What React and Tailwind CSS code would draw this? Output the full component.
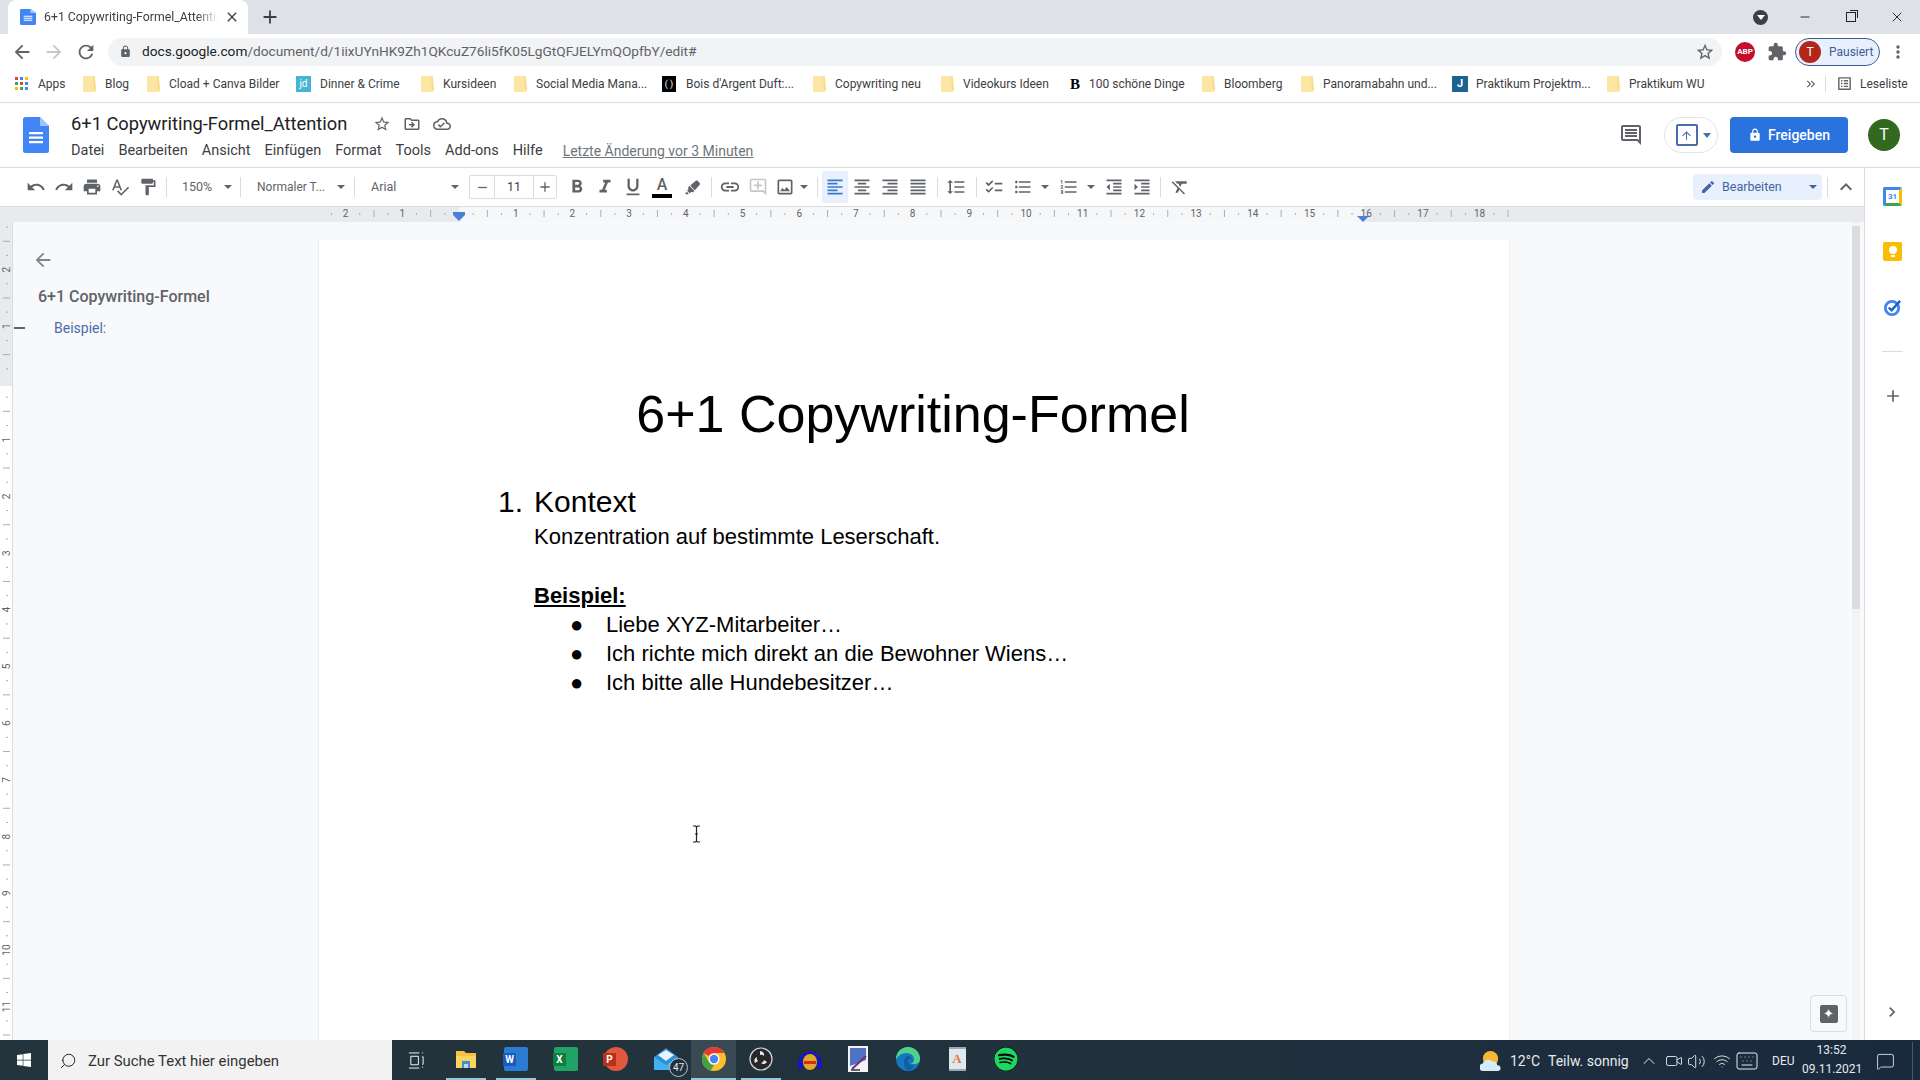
import React from 'react'
import {
  MdArrowBack, MdArrowForward, MdRefresh, MdLock, MdStarBorder, MdExtension, MdMoreVert, MdAdd, MdClose, MdRemove,
  MdUndo, MdRedo, MdPrint, MdSpellcheck, MdFormatPaint, MdFormatBold, MdFormatItalic, MdFormatUnderlined, MdLink,
  MdOutlineAddComment, MdOutlineImage, MdFormatAlignLeft, MdFormatAlignCenter, MdFormatAlignRight, MdFormatAlignJustify,
  MdFormatLineSpacing, MdChecklist, MdFormatListBulleted, MdFormatListNumbered, MdFormatIndentDecrease, MdFormatIndentIncrease,
  MdFormatClear, MdEdit, MdExpandLess, MdOutlineInsertComment, MdOutlineDriveFileMove, MdOutlineCloudDone, MdChevronRight,
  MdArrowUpward, MdKeyboardDoubleArrowRight, MdOutlineListAlt,
} from 'react-icons/md'
import { FaHighlighter, FaWindows, FaSpotify } from 'react-icons/fa'
import { ChevronUp, Video, Volume2, Wifi, Keyboard, MessageSquare, Minus, X, Search } from 'lucide-react'

function FolderMark() {
  return (
    <svg width="13" height="16" viewBox="0 0 13 16" className="shrink-0">
      <path d="M0 1.5C0 .7.7 0 1.5 0H10l3 13v1.5c0 .8-.7 1.5-1.5 1.5h-10C.7 16 0 15.300 0 14.500z" fill="#fbe7a1" />
      <path d="M10 0h.5c.8 0 1.500.7 1.500 1.500L13 14l-2-1z" fill="#f6dc8b" />
    </svg>
  )
}

function AppsGrid() {
  const cols = ['#ea4335', '#4285f4', '#fbbc04', '#34a853', '#ea4335', '#4285f4', '#fbbc04', '#34a853', '#4285f4']
  return (
    <div className="grid grid-cols-3 gap-[2px] w-[13px] shrink-0">
      {cols.map((c, i) => <div key={i} className="w-[3px] h-[3px]" style={{ background: c }} />)}
    </div>
  )
}

function JdMark() {
  return <div className="w-[15px] h-[16px] bg-[#45b5d6] text-white text-[10px] leading-[16px] text-center shrink-0">jd</div>
}

function BoisMark() {
  return <div className="w-[14px] h-[16px] bg-black text-white text-[9px] leading-[16px] text-center shrink-0">( )</div>
}

function BMark() {
  return <div className="w-[14px] text-black text-[15px] font-bold leading-[16px] text-center shrink-0 font-['Liberation_Serif',serif]">B</div>
}

function JMark() {
  return <div className="w-[16px] h-[16px] bg-[#1c6390] text-white text-[11px] font-bold leading-[16px] text-center shrink-0">J</div>
}

const bookmarks = [
  { w: 'w-[68px]', label: 'Apps', icon: <AppsGrid />, gap: 'gap-[10px]' },
  { w: 'w-[64px]', label: 'Blog', icon: <FolderMark />, gap: 'gap-[9px]' },
  { w: 'w-[149px]', label: 'Cload + Canva Bilder', icon: <FolderMark />, gap: 'gap-[9px]' },
  { w: 'w-[125px]', label: 'Dinner & Crime', icon: <JdMark />, gap: 'gap-[9px]' },
  { w: 'w-[93px]', label: 'Kursideen', icon: <FolderMark />, gap: 'gap-[9px]' },
  { w: 'w-[148px]', label: 'Social Media Mana...', icon: <FolderMark />, gap: 'gap-[9px]' },
  { w: 'w-[151px]', label: "Bois d'Argent Duft:...", icon: <BoisMark />, gap: 'gap-[10px]' },
  { w: 'w-[128px]', label: 'Copywriting neu', icon: <FolderMark />, gap: 'gap-[9px]' },
  { w: 'w-[127px]', label: 'Videokurs Ideen', icon: <FolderMark />, gap: 'gap-[9px]' },
  { w: 'w-[134px]', label: '100 schöne Dinge', icon: <BMark />, gap: 'gap-[7px]' },
  { w: 'w-[99px]', label: 'Bloomberg', icon: <FolderMark />, gap: 'gap-[9px]' },
  { w: 'w-[151px]', label: 'Panoramabahn und...', icon: <FolderMark />, gap: 'gap-[9px]' },
  { w: 'w-[155px]', label: 'Praktikum Projektm...', icon: <JMark />, gap: 'gap-[8px]' },
  { w: 'w-[120px]', label: 'Praktikum WU', icon: <FolderMark />, gap: 'gap-[9px]' },
]

function DocsMark({ small }) {
  return (
    <svg viewBox="0 0 26 36" className={small ? 'w-[16px] h-[16px]' : 'w-[26px] h-[36px]'} preserveAspectRatio="none">
      <path d="M2.500 0H17l9 9v24.500a2.500 2.500 0 0 1-2.500 2.500h-21A2.500 2.500 0 0 1 0 33.500v-31A2.500 2.500 0 0 1 2.500 0z" fill="#4285f4" />
      <path d="M17 0l9 9h-9z" fill="#a1c2fa" />
      <path d="M6 15h14v2.200H6zM6 19.500h14v2.200H6zM6 24h14v2.200H6z" fill="#fff" />
    </svg>
  )
}

function TabStrip() {
  return (
    <div className="h-[34px] bg-[#dee1e6] flex items-end shrink-0">
      <div className="ml-[8px] w-[240px] h-[34px] bg-white rounded-t-[8px] flex items-center pl-[12px] pr-[8px]">
        <DocsMark small />
        <div className="ml-[8px] w-[174px] text-[12.3px] text-[#3c4043] whitespace-nowrap overflow-hidden [mask-image:linear-gradient(to_right,black_88%,transparent)]">6+1 Copywriting-Formel_Attention</div>
        <MdClose className="ml-[6px] text-[16px] text-[#3c4043] shrink-0" />
      </div>
      <div className="h-[34px] flex items-center ml-[11px]">
        <MdAdd className="text-[22px] text-[#3c4043]" />
      </div>
      <div className="ml-auto h-[34px] flex items-center">
        <div className="w-[15px] h-[15px] rounded-full bg-[#3c4043] flex items-center justify-center mr-[14px]">
          <div className="w-0 h-0 border-x-[4px] border-x-transparent border-t-[5px] border-t-white" />
        </div>
        <div className="w-[46px] flex justify-center"><Minus size={14} strokeWidth={1.6} color="#202124" /></div>
        <div className="w-[46px] flex justify-center">
          <div className="relative w-[10px] h-[10px] border border-[#202124]">
            <div className="absolute -top-[3px] -right-[3px] w-[8px] h-[8px] border-t border-r border-[#202124]" />
          </div>
        </div>
        <div className="w-[46px] flex justify-center"><X size={16} strokeWidth={1.4} color="#202124" /></div>
      </div>
    </div>
  )
}

function AddressBar() {
  return (
    <div className="h-[35px] bg-white flex items-center shrink-0">
      <div className="w-[108px] flex items-center pl-[11px] gap-[10px] shrink-0">
        <MdArrowBack className="text-[22px] text-[#5f6368]" />
        <MdArrowForward className="text-[22px] text-[#c4c7c9]" />
        <MdRefresh className="text-[22px] text-[#5f6368]" />
      </div>
      <div className="w-[1614px] h-[28px] bg-[#f1f3f4] rounded-full flex items-center pl-[11px] pr-[7px] shrink-0">
        <MdLock className="text-[13px] text-[#5f6368] shrink-0" />
        <div className="ml-[10px] text-[13.68px] whitespace-nowrap text-[#5f6368]">
          <span className="text-[#202124]">docs.google.com</span>/document/d/1iixUYnHK9Zh1QKcuZ76li5fK05LgGtQFJELYmQOpfbY/edit#
        </div>
        <MdStarBorder className="ml-auto text-[20px] text-[#5f6368]" />
      </div>
      <div className="ml-[13px] w-[20px] h-[20px] rounded-full bg-[#c70d2c] text-white text-[8px] font-bold flex items-center justify-center shrink-0">ABP</div>
      <MdExtension className="ml-[12px] text-[20px] text-[#5f6368] shrink-0" />
      <div className="ml-[8px] w-[85px] h-[28px] rounded-full border border-[#3f5d92] bg-[#e8f0fe] flex items-center pl-[3px] shrink-0">
        <div className="w-[22px] h-[22px] rounded-full bg-[#b3261a] text-white text-[12px] flex items-center justify-center">T</div>
        <div className="ml-[8px] text-[12px] text-[#3f5d92]">Pausiert</div>
      </div>
      <MdMoreVert className="ml-[8px] text-[20px] text-[#5f6368] shrink-0" />
    </div>
  )
}

function BookmarkBar() {
  return (
    <div className="h-[34px] pb-[4px] bg-white border-b border-[#dadce0] flex items-center pl-[15px] shrink-0">
      {bookmarks.map((b) => (
        <div key={b.label} className={`${b.w} flex items-center ${b.gap} shrink-0`}>
          {b.icon}
          <span className="text-[12px] text-[#3c4043] whitespace-nowrap">{b.label}</span>
        </div>
      ))}
      <MdKeyboardDoubleArrowRight className="ml-[77px] text-[14px] text-[#5f6368] shrink-0" />
      <div className="ml-[7px] w-px h-[16px] bg-[#dadce0] shrink-0" />
      <MdOutlineListAlt className="ml-[10px] text-[17px] text-[#5f6368] shrink-0" />
      <span className="ml-[7px] text-[12px] text-[#3c4043]">Leseliste</span>
    </div>
  )
}

const menus = ['Datei', 'Bearbeiten', 'Ansicht', 'Einfügen', 'Format', 'Tools', 'Add-ons', 'Hilfe']

function DocHeader() {
  return (
    <div className="h-[65px] bg-white border-b border-[#dadce0] flex items-start shrink-0">
      <div className="ml-[23px] mt-[14px] shrink-0"><DocsMark /></div>
      <div className="ml-[22px] mt-[9px]">
        <div className="h-[24px] flex items-center">
          <div className="w-[304px] text-[18.3px] text-[#202124] whitespace-nowrap">6+1 Copywriting-Formel_Attention</div>
          <MdStarBorder className="text-[18px] text-[#5f6368] ml-[-2px]" />
          <MdOutlineDriveFileMove className="text-[18px] text-[#5f6368] ml-[12px]" />
          <MdOutlineCloudDone className="text-[18px] text-[#5f6368] ml-[12px]" />
        </div>
        <div className="h-[24px] mt-[3px] flex items-center gap-[14px] text-[14.5px] text-[#3c4043] whitespace-nowrap">
          {menus.map((m) => <span key={m}>{m}</span>)}
          <span className="ml-[6px] text-[14px] text-[#70757a] underline">Letzte Änderung vor 3 Minuten</span>
        </div>
      </div>
      <div className="ml-auto mt-[14px] flex items-center">
        <MdOutlineInsertComment className="text-[24px] text-[#5f6368]" />
        <div className="ml-[21px] w-[54px] h-[36px] rounded-full border border-[#e2e4e7] flex items-center justify-center pl-[4px]">
          <div className="w-[22px] h-[22px] border-2 border-[#4a6ea9] rounded-[2px] flex items-center justify-center">
            <MdArrowUpward className="text-[13px] text-[#3d6fb4]" />
          </div>
          <div className="ml-[5px] w-0 h-0 border-x-[4px] border-x-transparent border-t-[5px] border-t-[#4a6ea9]" />
        </div>
        <div className="ml-[12px] w-[118px] h-[36px] rounded-[4px] bg-[#2a72de] text-white text-[14px] font-medium flex items-center justify-center gap-[6px]">
          <MdLock className="text-[14px]" />
          Freigeben
        </div>
        <div className="ml-[20px] mr-[20px] w-[32px] h-[32px] rounded-full bg-[#33691e] text-white text-[16px] flex items-center justify-center">T</div>
      </div>
    </div>
  )
}

function Sep({ className }) {
  return <div className={`w-px h-[20px] bg-[#dadce0] shrink-0 ${className}`} />
}

function Tool({ icon: Icon, className = '', size = 'text-[20px]', color = 'text-[#5f6368]' }) {
  return (
    <div className={`w-[28px] h-[26px] flex items-center justify-center shrink-0 ${className}`}>
      <Icon className={`${size} ${color}`} />
    </div>
  )
}

function Caret({ className = '' }) {
  return <div className={`w-0 h-0 border-x-[4px] border-x-transparent border-t-[4px] border-t-[#5f6368] shrink-0 ${className}`} />
}

function Toolbar() {
  return (
    <div className="h-[39px] bg-white border-b border-[#dadce0] flex items-center pl-[22px] shrink-0 text-[12.5px] text-[#5f6368]">
      <Tool icon={MdUndo} />
      <Tool icon={MdRedo} />
      <Tool icon={MdPrint} />
      <Tool icon={MdSpellcheck} />
      <Tool icon={MdFormatPaint} />
      <Sep className="ml-[4px]" />
      <div className="w-[73px] flex items-center pl-[15px] shrink-0">
        <span>150%</span>
        <Caret className="ml-auto mr-[8px]" />
      </div>
      <Sep />
      <div className="w-[113px] flex items-center pl-[16px] shrink-0">
        <span className="whitespace-nowrap text-[12px]">Normaler T...</span>
        <Caret className="ml-auto mr-[9px]" />
      </div>
      <Sep />
      <div className="w-[114px] flex items-center pl-[16px] shrink-0">
        <span>Arial</span>
        <Caret className="ml-auto mr-[10px]" />
      </div>
      <div className="w-[88px] h-[24px] border border-[#dadce0] rounded-[2px] flex items-center shrink-0">
        <div className="w-[24px] flex justify-center"><MdRemove className="text-[15px] text-[#5f6368]" /></div>
        <div className="w-[40px] h-full border-x border-[#dadce0] text-center leading-[22px] text-[#3c4043]">11</div>
        <div className="w-[22px] flex justify-center"><MdAdd className="text-[16px] text-[#5f6368]" /></div>
      </div>
      <Tool icon={MdFormatBold} className="ml-[6px]" size="text-[22px]" />
      <Tool icon={MdFormatItalic} size="text-[22px]" />
      <Tool icon={MdFormatUnderlined} size="text-[22px]" />
      <div className="w-[28px] h-[26px] ml-[1px] flex flex-col items-center justify-center shrink-0">
        <span className="text-[16px] leading-[18px] text-[#5f6368] font-medium">A</span>
        <div className="w-[20px] h-[4px] bg-black" />
      </div>
      <Tool icon={FaHighlighter} className="ml-[2px]" size="text-[15px]" />
      <Sep className="ml-[5px]" />
      <Tool icon={MdLink} className="ml-[4px]" size="text-[22px]" />
      <Tool icon={MdOutlineAddComment} color="text-[#c4c7c9]" />
      <div className="w-[26px] flex justify-center shrink-0"><MdOutlineImage className="text-[20px] text-[#5f6368]" /></div>
      <div className="w-[12px] flex justify-center shrink-0"><Caret /></div>
      <Sep className="ml-[7px]" />
      <div className="ml-[4px] w-[26px] h-[32px] bg-[#e8f0fe] rounded-[2px] flex items-center justify-center shrink-0">
        <MdFormatAlignLeft className="text-[20px] text-[#3b78c9]" />
      </div>
      <Tool icon={MdFormatAlignCenter} />
      <Tool icon={MdFormatAlignRight} />
      <Tool icon={MdFormatAlignJustify} />
      <Sep className="ml-[5px]" />
      <Tool icon={MdFormatLineSpacing} className="ml-[4px]" />
      <Sep className="ml-[6px]" />
      <Tool icon={MdChecklist} className="ml-[3px]" />
      <Tool icon={MdFormatListBulleted} className="ml-px" />
      <div className="w-[16px] flex justify-center shrink-0"><Caret /></div>
      <Tool icon={MdFormatListNumbered} className="ml-[2px]" />
      <div className="w-[16px] flex justify-center shrink-0"><Caret /></div>
      <Tool icon={MdFormatIndentDecrease} className="ml-px" />
      <Tool icon={MdFormatIndentIncrease} />
      <Sep className="ml-[4px]" />
      <Tool icon={MdFormatClear} className="ml-[5px]" />
      <div className="ml-auto w-[129px] h-[26px] bg-[#e8f0fe] rounded-[4px] flex items-center pl-[7px] text-[#41659f] shrink-0">
        <MdEdit className="text-[16px]" />
        <span className="ml-[6px]">Bearbeiten</span>
        <Caret className="ml-auto mr-[5px] border-t-[#41659f]" />
      </div>
      <Sep className="ml-[5px]" />
      <div className="w-[36px] flex justify-center shrink-0"><MdExpandLess className="text-[24px] text-[#5f6368]" /></div>
    </div>
  )
}

const hNums = Array.from({ length: 22 }, (_, i) => i - 3)

function Ruler() {
  const zero = 459
  const cm = 56.7
  // ticks only run across the page width
  const inPage = (x) => x >= 318 && x <= 1510
  return (
    <svg width="1864" height="15" className="block shrink-0 bg-[#e8eaed]">
      <rect x="459" y="0" width="905" height="15" fill="#f6f7f8" />
      {hNums.map((n) => {
        const x = zero + n * cm
        return (
          <g key={n}>
            {n !== 0 && n > -3 && <text x={x} y="10" textAnchor="middle" fontSize="10" fill="#5f6368" fontFamily="Roboto">{Math.abs(n)}</text>}
            {[0.25, 0.5, 0.75].filter((f) => inPage(x + cm * f)).map((f) => (
              <line key={f} x1={x + cm * f} x2={x + cm * f} y1={f === 0.5 ? 3 : 6} y2={f === 0.5 ? 10 : 8} stroke="#a9adb2" />
            ))}
          </g>
        )
      })}
      <path d="M453 5h12v3l-6 6-6-6z" fill="#4a80d8" />
      <path d="M1357 9h12l-6 6z" fill="#4a80d8" />
    </svg>
  )
}

const vNums = [-3, -2, -1, 0, 1, 2, 3, 4, 5, 6, 7, 8, 9, 10, 11]

function VRuler() {
  const zero = 161
  const cm = 56.7
  return (
    <svg width="13" height="818" className="block shrink-0 bg-white border-r border-[#dadce0]">
      <rect x="0" y="0" width="13" height="164" fill="#e8eaed" />
      {vNums.map((n) => {
        const y = zero + n * cm
        return (
          <g key={n}>
            {n !== 0 && n !== -3 && <text x="7" y={y + 3} transform={`rotate(-90 7 ${y})`} textAnchor="middle" fontSize="10" fill="#5f6368" fontFamily="Roboto">{Math.abs(n)}</text>}
            <line x1="3" x2="10" y1={y + cm / 2} y2={y + cm / 2} stroke="#a9adb2" />
            <line x1="6" x2="8" y1={y + cm / 4} y2={y + cm / 4} stroke="#a9adb2" />
            <line x1="6" x2="8" y1={y + (cm * 3) / 4} y2={y + (cm * 3) / 4} stroke="#a9adb2" />
          </g>
        )
      })}
    </svg>
  )
}

function Outline() {
  return (
    <div className="w-[305px] shrink-0 pt-[27px]">
      <MdArrowBack className="ml-[19px] text-[22px] text-[#80868b]" />
      <div className="ml-[25px] mt-[16px] text-[16px] font-medium leading-[20px] text-[#5f6368] whitespace-nowrap">6+1 Copywriting-Formel</div>
      <div className="mt-[11px] flex items-center h-[20px]">
        <div className="ml-px w-[11px] h-[2px] bg-[#5f6368]" />
        <div className="ml-[29px] text-[14px] text-[#4a6ea9]">Beispiel:</div>
      </div>
    </div>
  )
}

function DocPage() {
  return (
    <div className="w-[1192px] mt-[18px] bg-white border-x border-[#eceef0] shrink-0 font-['Liberation_Sans',sans-serif] text-black">
      <div className="pt-[144px] pr-[2px] text-center text-[52px] leading-[60px]">6+1 Copywriting-Formel</div>
      <div className="mt-[38px] flex text-[30px] leading-[40px] pl-[179px]">
        <span className="w-[36px]">1.</span>
        <span>Kontext</span>
      </div>
      <div className="pl-[215px] text-[22px] leading-[29.300px]">
        <div>Konzentration auf bestimmte Leserschaft.</div>
        <div className="h-[29.300px]" />
        <div className="font-bold underline">Beispiel:</div>
        {['Liebe XYZ-Mitarbeiter…', 'Ich richte mich direkt an die Bewohner Wiens…', 'Ich bitte alle Hundebesitzer…'].map((t) => (
          <div key={t} className="flex">
            <span className="w-[72px] pl-[36px]">●</span>
            <span>{t}</span>
          </div>
        ))}
      </div>
    </div>
  )
}

function SidePanel() {
  return (
    <div className="w-[56px] bg-white border-l border-[#dadce0] flex flex-col items-center pt-[19px] shrink-0">
      <div className="w-[19px] h-[19px] rounded-[2px] bg-white border-[3px] border-t-[#4285f4] border-l-[#4285f4] border-b-[#34a853] border-r-[#fbbc04] text-[8px] leading-[13px] text-center text-[#4285f4] font-bold">31</div>
      <div className="mt-[36px] w-[19px] h-[19px] rounded-[2px] bg-[#fbbc04] flex flex-col items-center justify-center">
        <div className="w-[8px] h-[8px] rounded-full bg-white" />
        <div className="w-[4px] h-[2px] bg-white mt-px" />
      </div>
      <svg viewBox="0 0 20 20" className="mt-[37px] w-[19px] h-[19px]">
        <circle cx="9.500" cy="10.500" r="7" fill="none" stroke="#4285f4" strokeWidth="3" />
        <path d="M6 10l3 3 9-10" fill="none" stroke="#1a5fd0" strokeWidth="2.500" />
      </svg>
      <div className="mt-[34px] w-[21px] h-px bg-[#dadce0]" />
      <MdAdd className="mt-[34px] text-[20px] text-[#5f6368]" />
    </div>
  )
}

function ExplorerIcon() {
  return (
    <svg viewBox="0 0 24 24" className="w-[24px] h-[24px]">
      <path d="M2 4h8l2 2h10v15H2z" fill="#f5c242" />
      <path d="M2 9h20v12H2z" fill="#fbd35f" />
      <path d="M8 14h8v7H8z" fill="#3f8fd2" />
      <path d="M10 17h4v4h-4z" fill="#bcd8ef" />
    </svg>
  )
}

function OfficeIcon({ back, front, letter }) {
  return (
    <div className="relative w-[24px] h-[24px] rounded-[2px]" style={{ background: back }}>
      <div className="absolute left-[-1px] top-[6px] w-[13px] h-[13px] text-white text-[10px] leading-[13px] font-bold text-center" style={{ background: front }}>{letter}</div>
    </div>
  )
}

function PptIcon() {
  return (
    <div className="relative w-[24px] h-[24px] rounded-full bg-[#e2583e]">
      <div className="absolute left-[-1px] top-[6px] w-[13px] h-[13px] bg-[#b7301a] text-white text-[10px] leading-[13px] font-bold text-center">P</div>
    </div>
  )
}

function MailIcon() {
  return (
    <div className="relative w-[26px] h-[24px]">
      <svg viewBox="0 0 26 24" className="w-[26px] h-[24px]">
        <path d="M13 1l12 9v13H1V10z" fill="#2d8fd8" />
        <path d="M1 10l12 8 12-8v13H1z" fill="#43b0f1" />
        <path d="M5 8l8-5 8 5-8 6z" fill="#e6f3fb" />
      </svg>
      <div className="absolute right-[-9px] bottom-[-6px] w-[19px] h-[19px] rounded-full bg-[#22323c] border border-[#b7c2c8] text-[#e8eaed] text-[10px] leading-[17px] text-center">47</div>
    </div>
  )
}

function ChromeIcon() {
  return (
    <svg viewBox="0 0 24 24" className="w-[24px] h-[24px]">
      <circle cx="12" cy="12" r="12" fill="#fbc02d" />
      <path d="M12 0a12 12 0 0 1 10.400 6H12a6 6 0 0 0-5.200 3L1.600 6A12 12 0 0 1 12 0z" fill="#e53935" />
      <path d="M1.600 6l5.200 9a6 6 0 0 0 5.200 3l-3.400 5.600A12 12 0 0 1 1.600 6z" fill="#43a047" />
      <circle cx="12" cy="12" r="5.500" fill="#fff" />
      <circle cx="12" cy="12" r="4.200" fill="#4285f4" />
    </svg>
  )
}

function ObsIcon() {
  return (
    <svg viewBox="0 0 24 24" className="w-[24px] h-[24px]">
      <circle cx="12" cy="12" r="11" fill="#26262b" stroke="#d8d8d8" strokeWidth="1.200" />
      <path d="M11 4a4 4 0 0 1 4 5 4 4 0 0 0-4-1zM18 15a4 4 0 0 1-6 1 4 4 0 0 0 3-3zM6 16a4 4 0 0 1 2-6 4 4 0 0 0 1 4z" fill="#e8e8e8" />
    </svg>
  )
}

function AudacityIcon() {
  return (
    <svg viewBox="0 0 26 24" className="w-[26px] h-[24px]">
      <path d="M3 16a10 10 0 0 1 20 0" fill="none" stroke="#1517c4" strokeWidth="3" />
      <rect x="1" y="13" width="5" height="9" rx="2" fill="#1517c4" />
      <rect x="20" y="13" width="5" height="9" rx="2" fill="#1517c4" />
      <ellipse cx="13" cy="15" rx="7" ry="8" fill="#e0a92b" />
      <path d="M7 14h12v3H7z" fill="#d32b1f" />
    </svg>
  )
}

function PaintDocIcon() {
  return (
    <svg viewBox="0 0 20 26" className="w-[20px] h-[26px]">
      <rect width="20" height="26" fill="#f2f4f8" />
      <path d="M2 2h16v12L2 20z" fill="#4f73c4" />
      <path d="M4 23L18 10" stroke="#7a2b7e" strokeWidth="2" />
      <path d="M3 24h9" stroke="#333" strokeWidth="1.500" />
    </svg>
  )
}

function EdgeIcon() {
  return (
    <svg viewBox="0 0 24 24" className="w-[24px] h-[26px]">
      <circle cx="12" cy="12" r="12" fill="#1478c0" />
      <path d="M12 0a12 12 0 0 1 12 12c0 4-3 5-6 5h-5c3 0 5-2 5-5 0-3-3-6-8-6-4 0-7 2-10 6A12 12 0 0 1 12 0z" fill="#4fd18b" />
      <path d="M8 14c0-3 2-5 4-5s3 1 4 3c-2-1-4 0-4 2s3 5 6 5c-2 3-4 4-6 4-3 0-4-5-4-9z" fill="#0f5ea8" />
    </svg>
  )
}

function WordPadIcon() {
  return (
    <div className="w-[17px] h-[24px] bg-[#dfe7ef] text-[#e2783a] text-[13px] font-bold text-center leading-[20px] font-['Liberation_Serif',serif] border-y-2 border-[#9aa9b8]">A</div>
  )
}

const apps = [
  { w: 'w-[50px]', icon: <ExplorerIcon />, line: true },
  { w: 'w-[50px]', icon: <OfficeIcon back="#2b7cd3" front="#185abd" letter="W" />, line: true },
  { w: 'w-[50px]', icon: <OfficeIcon back="#21a366" front="#107c41" letter="X" /> },
  { w: 'w-[50px]', icon: <PptIcon /> },
  { w: 'w-[50px]', icon: <MailIcon /> },
  { w: 'w-[45px]', icon: <ChromeIcon />, line: true, active: true },
  { w: 'w-[50px]', icon: <ObsIcon />, line: true },
  { w: 'w-[48px]', icon: <AudacityIcon /> },
  { w: 'w-[47px]', icon: <PaintDocIcon /> },
  { w: 'w-[53px]', icon: <EdgeIcon /> },
  { w: 'w-[46px]', icon: <WordPadIcon /> },
  { w: 'w-[52px]', icon: <FaSpotify className="text-[24px] text-[#1ed760] bg-black rounded-full" /> },
]

function WeatherIcon() {
  return (
    <svg viewBox="0 0 22 22" className="w-[21px] h-[21px] shrink-0">
      <circle cx="11" cy="8" r="8" fill="#f7b731" />
      <path d="M4 21a4 4 0 0 1-1-8 6 6 0 0 1 10-2 4 4 0 0 1 5 4 3 3 0 0 1 1 6z" fill="#d4ecfa" />
    </svg>
  )
}

function Taskbar() {
  return (
    <div className="h-[40px] bg-gradient-to-r from-[#24343c] via-[#22323c] to-[#1a2a3e] flex items-center shrink-0 text-[#e8eaed]">
      <div className="w-[48px] flex justify-center shrink-0"><FaWindows className="text-[16px] text-white" /></div>
      <div className="w-[344px] h-[40px] bg-[#f2f2f2] flex items-center pl-[11px] pt-[2px] shrink-0">
        <Search size={18} strokeWidth={1.3} color="#222" className="-scale-x-100" />
        <span className="ml-[11px] text-[14.9px] text-[#333]">Zur Suche Text hier eingeben</span>
      </div>
      <div className="w-[49px] flex justify-center shrink-0">
        <svg viewBox="0 0 18 18" className="w-[17px] h-[17px]" fill="none" stroke="#fff" strokeWidth="1">
          <path d="M1 1h11M1 17h11M3 4.500h8v9H3zM15 1h1M15 5h1v8h-1M15 16h1" />
        </svg>
      </div>
      {apps.map((a, i) => (
        <div key={i} className={`${a.w} h-[40px] flex flex-col items-center shrink-0 ${a.active ? 'bg-[#3a4a52]' : ''}`}>
          <div className="h-[38px] flex items-center">{a.icon}</div>
          <div className={`h-[2px] ${a.active ? 'w-full' : 'w-[40px]'} ${a.line ? 'bg-[#9cc4da]' : ''}`} />
        </div>
      ))}
      <div className="ml-auto w-[440px] pt-[2px] flex items-center text-[14px] shrink-0">
        <WeatherIcon />
        <span className="ml-[9px] w-[29px] whitespace-nowrap">12°C</span>
        <span className="ml-[9px] w-[78px] whitespace-nowrap">Teilw. sonnig</span>
        <ChevronUp size={20} strokeWidth={1.2} className="ml-[13px]" />
        <Video size={18} strokeWidth={1.2} className="ml-[6px]" />
        <Volume2 size={19} strokeWidth={1.2} className="ml-[4px]" />
        <Wifi size={18} strokeWidth={1.2} className="ml-[7px]" />
        <Keyboard size={24} strokeWidth={1} className="ml-[4px]" />
        <span className="ml-[13px] w-[22px] text-[12px]">DEU</span>
        <div className="ml-[8px] w-[59px] text-center text-[12px] leading-[19px] whitespace-nowrap -mt-[2px]">
          <div>13:52</div>
          <div>09.11.2021</div>
        </div>
        <MessageSquare size={19} strokeWidth={1.1} className="ml-[15px]" />
        <div className="ml-[17px] w-px h-[38px] bg-[#4a5866]" />
      </div>
    </div>
  )
}

export default function App() {
  return (
    <div className="relative w-[1920px] h-[1080px] overflow-hidden flex flex-col bg-white font-['Roboto',sans-serif]">
      <TabStrip />
      <AddressBar />
      <BookmarkBar />
      <DocHeader />
      <div className="flex-1 flex min-h-0">
        <div className="w-[1864px] flex flex-col shrink-0">
          <Toolbar />
          <Ruler />
          <div className="flex-1 flex min-h-0 bg-[#f8f9fa] overflow-hidden">
            <VRuler />
            <Outline />
            <DocPage />
            <div className="ml-auto mr-[4px] w-[8px] bg-[#f1f3f4] shrink-0">
              <div className="mt-[4px] h-[383px] bg-[#dadce0]" />
            </div>
          </div>
        </div>
        <SidePanel />
      </div>
      <Taskbar />
      {/* floating bits on top of the page */}
      <div className="absolute left-[1810px] top-[995px] w-[37px] h-[37px] bg-[#f8f9fa] border border-[#dadce0] rounded-[4px] flex items-center justify-center">
        <div className="w-[18px] h-[18px] rounded-[2px] bg-[#5f6368] flex items-center justify-center text-white text-[13px] leading-none">✦</div>
      </div>
      <MdChevronRight className="absolute left-[1882px] top-[1002px] text-[20px] text-[#5f6368]" />
      <svg viewBox="0 0 9 18" className="absolute left-[692px] top-[825px] w-[9px] h-[18px]" fill="none" stroke="#222" strokeWidth="1.200">
        <path d="M1 1h2.500l1 1 1-1H8M4.500 2v14M1 17h2.500l1-1 1 1H8M3 9h3" />
      </svg>
    </div>
  )
}
